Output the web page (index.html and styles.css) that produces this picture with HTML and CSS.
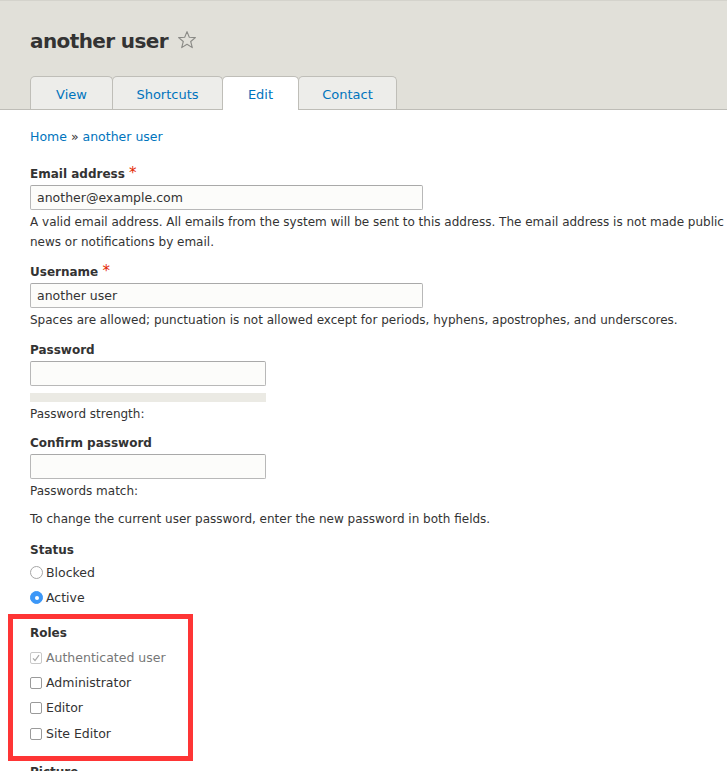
FILE: index.html
```html
<!DOCTYPE html>
<html>
<head>
<meta charset="utf-8">
<link rel="stylesheet" href="styles.css">
</head>
<body>
<header class="page-head">
  <h1 class="title">another user <svg class="star" viewBox="0 0 20 20" width="20" height="20"><path d="M10 1.6 L12.3 7.3 L18.4 7.6 L13.7 11.5 L15.3 17.6 L10 14.2 L4.7 17.6 L6.3 11.5 L1.6 7.6 L7.7 7.3 Z" fill="none" stroke="#8a8a86" stroke-width="1.1" stroke-linejoin="round"/></svg></h1>
  <ul class="tabs">
    <li class="tab tab-view"><a>View</a></li>
    <li class="tab tab-shortcuts"><a>Shortcuts</a></li>
    <li class="tab tab-edit active"><a>Edit</a></li>
    <li class="tab tab-contact"><a>Contact</a></li>
  </ul>
</header>
<main class="content">
  <nav class="breadcrumb"><a>Home</a> » <a>another user</a></nav>

  <div class="item item-email">
    <label class="label">Email address <span class="req">*</span></label>
    <div class="input wide">another@example.com</div>
    <div class="desc desc-nowrap">A valid email address. All emails from the system will be sent to this address. The email address is not made public and will only be used if you wish to receive a new password or wish to receive certain<br>news or notifications by email.</div>
  </div>

  <div class="item item-user">
    <label class="label">Username <span class="req">*</span></label>
    <div class="input wide">another user</div>
    <div class="desc">Spaces are allowed; punctuation is not allowed except for periods, hyphens, apostrophes, and underscores.</div>
  </div>

  <div class="item item-pass">
    <label class="label">Password</label>
    <div class="input narrow"></div>
    <div class="strength"></div>
    <div class="desc">Password strength:</div>
  </div>

  <div class="item item-confirm">
    <label class="label">Confirm password</label>
    <div class="input narrow"></div>
    <div class="desc">Passwords match:</div>
  </div>

  <div class="desc note">To change the current user password, enter the new password in both fields.</div>

  <div class="item item-status">
    <div class="label">Status</div>
    <div class="opt"><span class="radio"></span>Blocked</div>
    <div class="opt"><span class="radio on"></span>Active</div>
  </div>

  <div class="roles">
    <div class="label">Roles</div>
    <div class="opt disabled"><span class="check checked"><svg viewBox="0 0 12 12" width="12" height="12"><path d="M3 6.3 L5 8.5 L9 3.2" fill="none" stroke="#a8a8a8" stroke-width="1.2"/></svg></span>Authenticated user</div>
    <div class="opt"><span class="check"></span>Administrator</div>
    <div class="opt"><span class="check"></span>Editor</div>
    <div class="opt"><span class="check"></span>Site Editor</div>
  </div>

  <div class="label picture">Picture</div>
</main>
</body>
</html>
```
FILE: styles.css
```css
html, body {
  margin: 0;
  padding: 0;
  background: #fff;
  overflow: hidden;
}
body {
  font-family: "DejaVu Sans", "Liberation Sans", sans-serif;
  color: #333;
  width: 727px;
  height: 771px;
}
a {
  color: #0074bd;
  text-decoration: none;
}
.page-head {
  background: #e1e0d9;
  border-top: 1px solid #d4d3cc;
  border-bottom: 1px solid #bebdb7;
  padding: 25px 0 0 30px;
}
.title {
  margin: 0;
  font-size: 20px;
  line-height: 30px;
  font-weight: bold;
  color: #333;
  display: flex;
  align-items: center;
  gap: 9px;
  height: 30px;
  letter-spacing: -0.6px;
}
.star {
  margin-top: -2px;
}
.tabs {
  list-style: none;
  margin: 20px 0 0 0;
  padding: 0;
  display: flex;
  height: 34px;
  margin-bottom: -1px;
}
.tab {
  background: #ededea;
  border: 1px solid #bfbeb8;
  border-bottom: none;
  border-radius: 5px 5px 0 0;
  height: 33px;
  display: flex;
  align-items: center;
  justify-content: center;
  font-size: 13px;
  box-sizing: border-box;
  margin-right: -1px;
  align-self: flex-start;
  padding-top: 2px;
}
.tab a {
  color: #0074bd;
}
.tab-view { width: 83px; }
.tab-shortcuts { width: 111px; }
.tab-edit { width: 77px; }
.tab-contact { width: 99px; }
.tab.active {
  background: #fff;
  height: 34px;
  padding-top: 1px;
  position: relative;
  z-index: 1;
}
.content {
  padding: 17px 30px 0 30px;
}
.breadcrumb {
  font-size: 12.5px;
  line-height: 20px;
  color: #333;
}
.item {
  margin-top: 16px;
}
.label {
  display: block;
  font-weight: bold;
  font-size: 12px;
  line-height: 20px;
  color: #333;
}
.req {
  color: #e32700;
  font-size: 15px;
  font-weight: normal;
}
.input {
  box-sizing: border-box;
  height: 25px;
  margin-top: 1px;
  background: #fcfcfa;
  border: 1px solid #b8b8b8;
  border-top-color: #a9a9a9;
  border-radius: 2px;
  padding: 0 6px;
  font-size: 12.5px;
  line-height: 23px;
  color: #333;
}
.wide { width: 393px; }
.narrow { width: 236px; }
.desc {
  font-size: 12px;
  line-height: 20px;
  color: #333;
  margin-top: 2px;
}
.desc-nowrap {
  white-space: nowrap;
}
.item-user { margin-top: 9px; }
.item-pass { margin-top: 10px; }
.strength {
  width: 236px;
  height: 9px;
  background: #ebeae4;
  margin-top: 7px;
}
.item-pass .desc { margin-top: 2px; }
.item-confirm { margin-top: 9px; }
.note { margin-top: 8px; }
.item-status { margin-top: 11px; }
.opt {
  display: flex;
  align-items: center;
  font-size: 12.5px;
  line-height: 20px;
  height: 25px;
  color: #333;
}
.roles .opt {
  height: 25.3px;
}
.radio {
  width: 13px;
  height: 13px;
  box-sizing: border-box;
  border: 1px solid #a6a6a6;
  border-radius: 50%;
  background: #fff;
  margin-right: 3px;
  flex: none;
}
.radio.on {
  background: #3c97f7;
  border-color: #3c97f7;
  display: flex;
  align-items: center;
  justify-content: center;
}
.radio.on::after {
  content: "";
  width: 4px;
  height: 4px;
  background: #fff;
  border-radius: 50%;
}
.check {
  width: 12px;
  height: 12px;
  box-sizing: border-box;
  border: 1px solid #9a9a9a;
  border-radius: 2px;
  background: #fff;
  margin-right: 4px;
  flex: none;
  display: flex;
  align-items: center;
  justify-content: center;
}
.check svg { flex: none; }
.check.checked {
  border-color: #c8c8c8;
}
.opt.disabled {
  color: #777;
}
.roles {
  margin: 4px 0 0 -22px;
  width: 185px;
  height: 147px;
  box-sizing: border-box;
  border: 5px solid #fe3535;
  padding: 4px 0 0 17px;
}
.roles .label { margin-bottom: 2px; }
.picture {
  margin-top: 1px;
}
```
